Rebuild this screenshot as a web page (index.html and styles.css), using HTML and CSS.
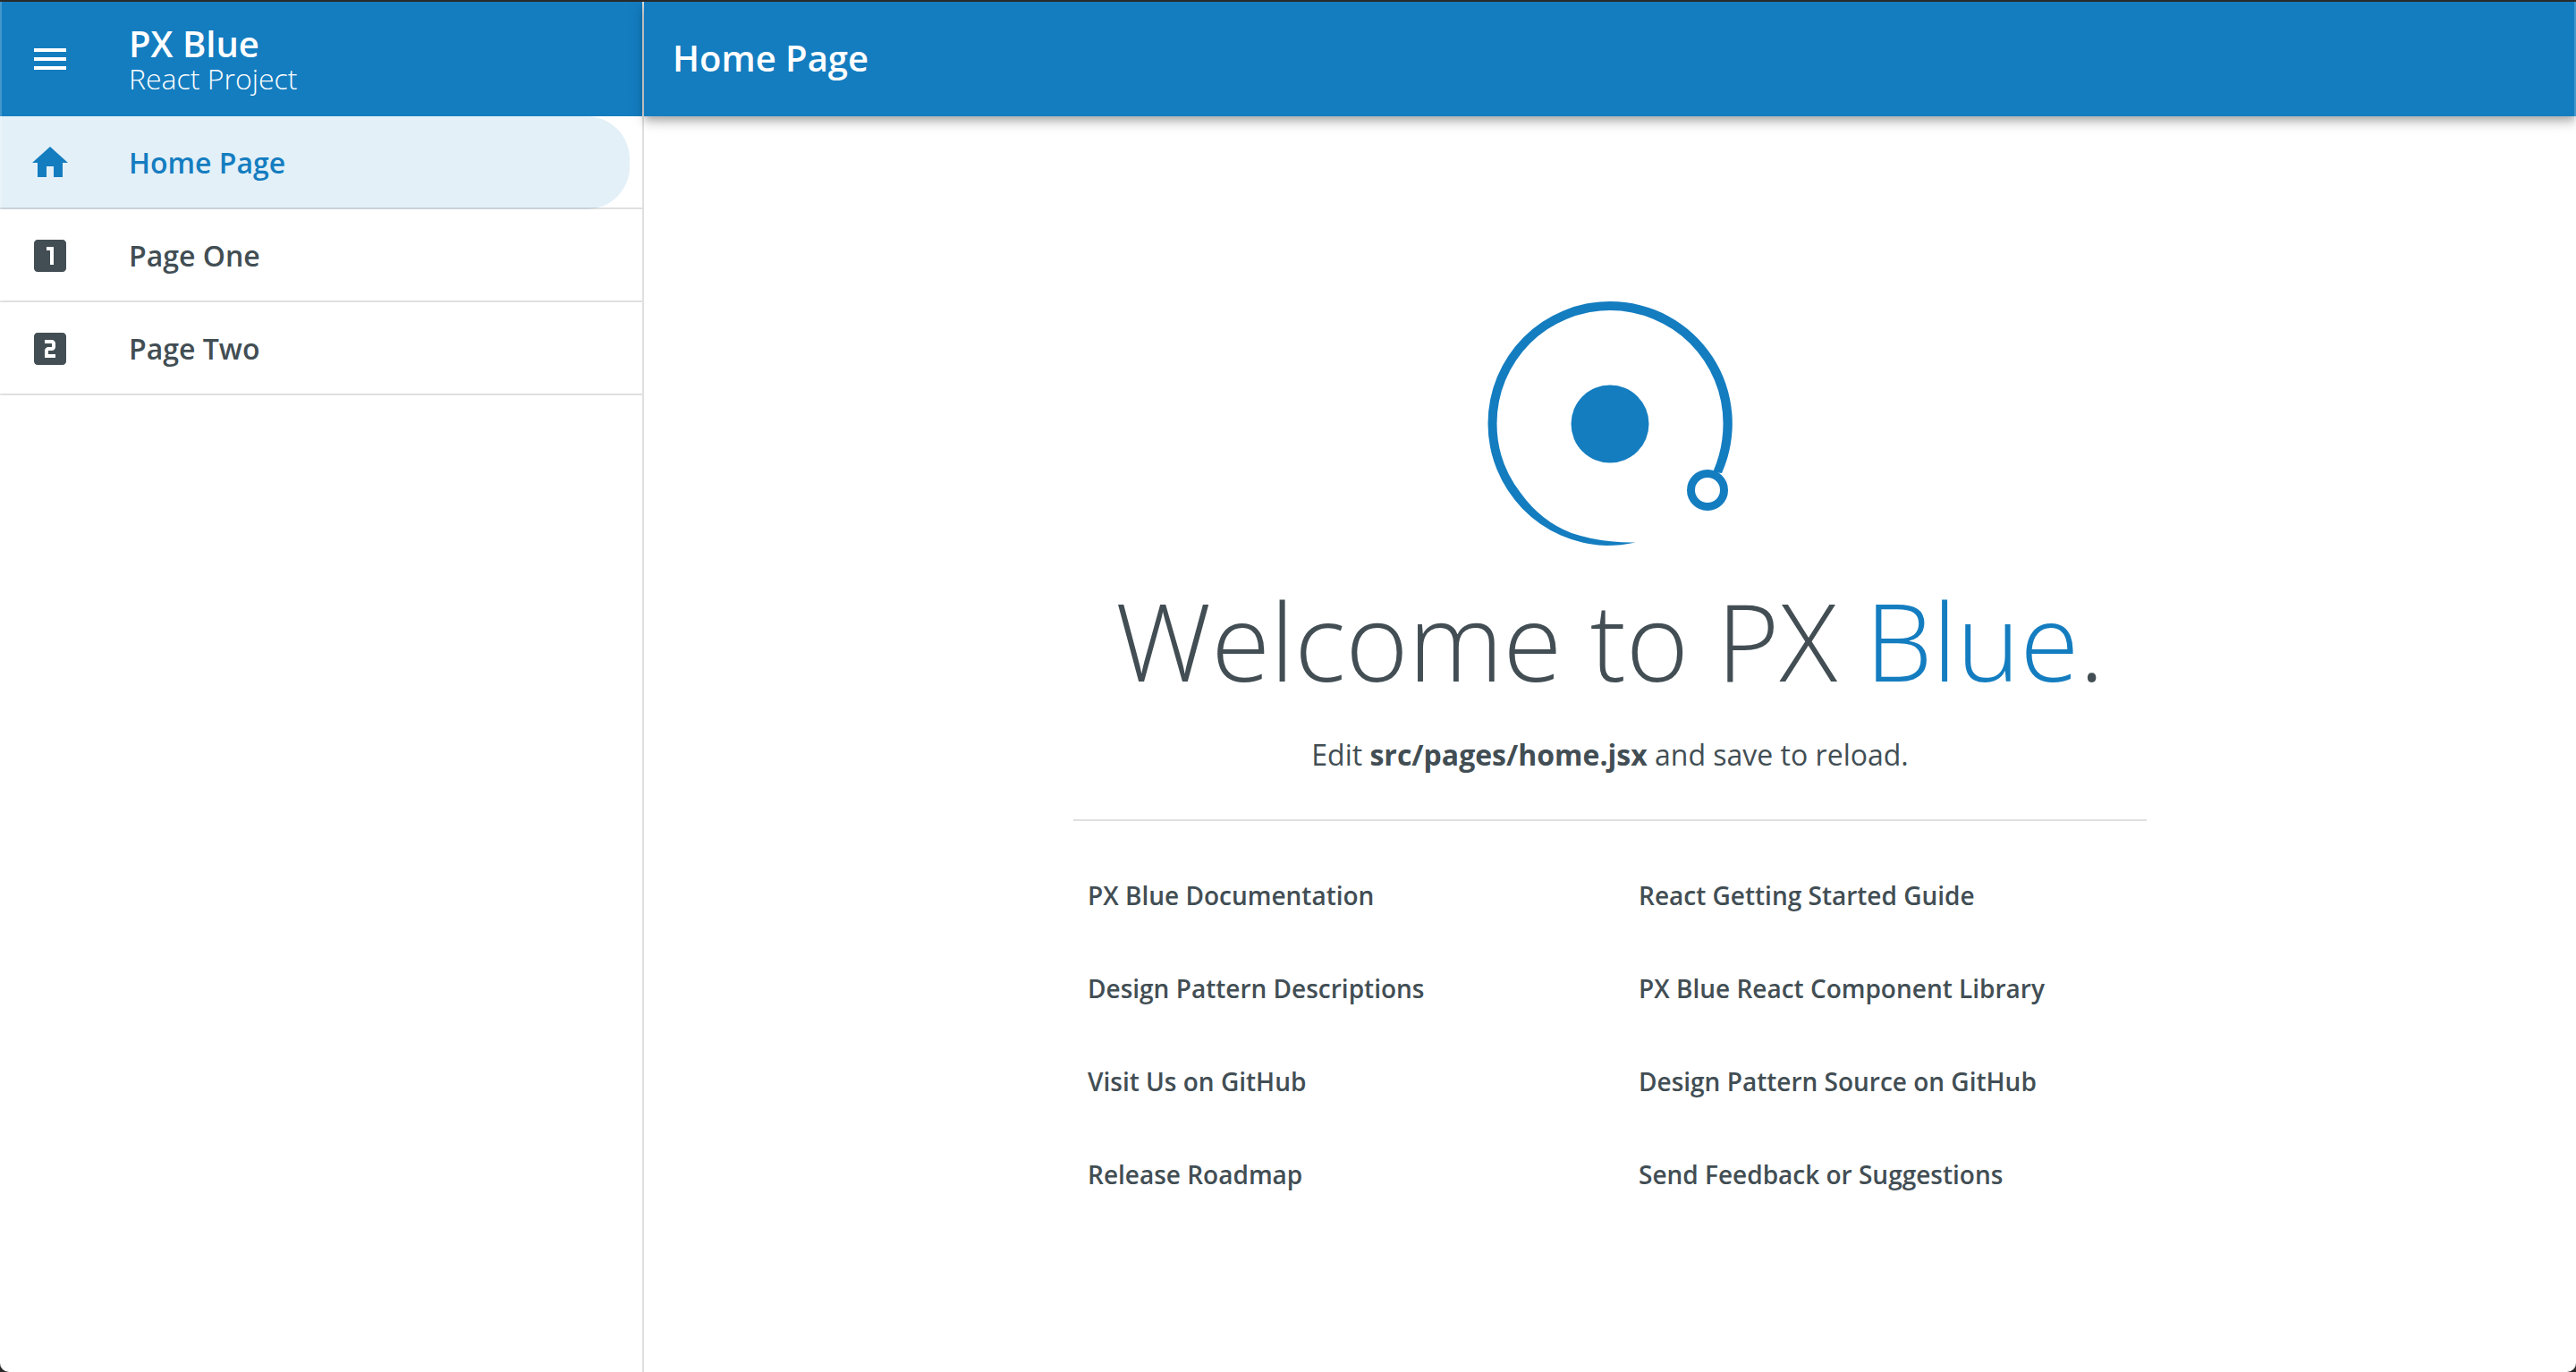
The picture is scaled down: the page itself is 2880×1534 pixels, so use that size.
FILE: index.html
```html
<!DOCTYPE html>
<html lang="en">
<head>
<meta charset="utf-8">
<title>PX Blue React Project</title>
<link rel="stylesheet" href="styles.css">
</head>
<body>
<div class="app">
  <aside class="drawer">
    <header class="drawer-header">
      <button class="menu-button" type="button" aria-label="Toggle menu">
        <svg class="icon" viewBox="0 0 24 24" aria-hidden="true"><path d="M3 18h18v-2H3v2zm0-5h18v-2H3v2zm0-7v2h18V6H3z"/></svg>
      </button>
      <div class="brand">
        <div class="brand-title">PX Blue</div>
        <div class="brand-subtitle">React Project</div>
      </div>
    </header>
    <nav class="nav" aria-label="Main">
      <a class="nav-item active" href="#home" aria-current="page">
        <svg class="icon" viewBox="0 0 24 24" aria-hidden="true"><path d="M10 20v-6h4v6h5v-8h3L12 3 2 12h3v8z"/></svg>
        <span class="nav-label">Home Page</span>
      </a>
      <a class="nav-item" href="#page-one">
        <svg class="icon" viewBox="0 0 24 24" aria-hidden="true"><path d="M19 3H5c-1.100 0-2 .9-2 2v14c0 1.100.9 2 2 2h14c1.100 0 2-.9 2-2V5c0-1.100-.9-2-2-2zm-5 14h-2V9h-2V7h4v10z"/></svg>
        <span class="nav-label">Page One</span>
      </a>
      <a class="nav-item" href="#page-two">
        <svg class="icon" viewBox="0 0 24 24" aria-hidden="true"><path d="M19 3H5c-1.100 0-2 .9-2 2v14c0 1.100.9 2 2 2h14c1.100 0 2-.9 2-2V5c0-1.100-.9-2-2-2zm-4 8c0 1.110-.9 2-2 2h-2v2h4v2H9v-4c0-1.110.9-2 2-2h2V9H9V7h4c1.100 0 2 .89 2 2v2z"/></svg>
        <span class="nav-label">Page Two</span>
      </a>
    </nav>
  </aside>
  <div class="content">
    <header class="app-bar">
      <h2 class="page-title">Home Page</h2>
    </header>
    <main class="main">
      <div class="welcome">
        <svg class="logo" viewBox="-16 -22 352 352" role="img" aria-label="PX Blue logo">
          <path d="M285 209A136.500 136.500 0 0 0 160 17A136.500 136.500 0 0 0 23.500 153.500A136.500 136.500 0 0 0 156 290Q172 290 188.500 286.500Q150 287 117 276Q83 263 60 231A126.500 126.500 0 0 1 33.500 153.500A126.500 126.500 0 0 1 160 27A126.500 126.500 0 0 1 286.500 153.500Q286.500 182 275 208Z"/>
          <circle cx="160" cy="154" r="43.500"/>
          <circle class="logo-ring" cx="269" cy="228" r="18.500"/>
        </svg>
        <h1 class="headline">Welcome to PX <span class="accent">Blue</span>.</h1>
        <p class="hint">Edit <strong>src/pages/home.jsx</strong> and save to reload.</p>
        <hr class="divider">
        <div class="links">
          <a href="#docs">PX Blue Documentation</a>
          <a href="#guide">React Getting Started Guide</a>
          <a href="#patterns">Design Pattern Descriptions</a>
          <a href="#components">PX Blue React Component Library</a>
          <a href="#github">Visit Us on GitHub</a>
          <a href="#pattern-source">Design Pattern Source on GitHub</a>
          <a href="#roadmap">Release Roadmap</a>
          <a href="#feedback">Send Feedback or Suggestions</a>
        </div>
      </div>
    </main>
  </div>
</div>
<div class="window-frame" aria-hidden="true"></div>
</body>
</html>
```
FILE: styles.css
```css
:root {
  --blue: #147dc0;
  --text: #424e54;
  --line: #e0e0e0;
}

* {
  box-sizing: border-box;
}

body {
  margin: 0;
  background: #fff;
  color: var(--text);
  font-family: "Open Sans", "Noto Sans", sans-serif;
}

a {
  color: inherit;
  text-decoration: none;
}

.app {
  display: flex;
  min-height: 100vh;
  padding-top: 2px;
}

.icon {
  display: block;
  flex: none;
  width: 48px;
  height: 48px;
  fill: currentColor;
}

/* Drawer */
.drawer {
  flex: none;
  width: 720px;
  border-right: 2px solid var(--line);
}

.drawer-header {
  display: flex;
  align-items: center;
  gap: 64px;
  height: 128px;
  padding: 0 32px;
  background: var(--blue);
  color: #fff;
}

.menu-button {
  padding: 0;
  border: 0;
  background: none;
  color: inherit;
}

.brand {
  padding-top: 4px;
}

.brand-title {
  font-size: 40px;
  font-weight: 600;
  line-height: 40px;
}

.brand-subtitle {
  font-size: 32px;
  font-weight: 300;
  line-height: 38px;
}

.nav-item {
  position: relative;
  display: flex;
  align-items: center;
  gap: 64px;
  height: 104px;
  padding: 0 32px;
  font-size: 32px;
  font-weight: 600;
  box-shadow: inset 0 -2px rgba(0, 0, 0, 0.12);
}

.nav-label {
  padding-bottom: 2px;
}

.nav-item.active {
  color: var(--blue);
}

.nav-item.active::before {
  content: "";
  position: absolute;
  z-index: -1;
  inset: 0 14px 0 0;
  border-radius: 0 48px 48px 0;
  background: #e3f0f8;
}

/* Page */
.content {
  display: flex;
  flex: 1;
  flex-direction: column;
}

.app-bar {
  position: relative;
  display: flex;
  align-items: center;
  height: 128px;
  padding: 0 32px 2px;
  background: var(--blue);
  color: #fff;
  box-shadow: 0 4px 8px -2px rgba(0, 0, 0, 0.2), 0 8px 10px rgba(0, 0, 0, 0.14), 0 2px 20px rgba(0, 0, 0, 0.12);
}

.page-title {
  margin: 0;
  font-size: 40px;
  font-weight: 600;
  line-height: 64px;
}

.main {
  display: flex;
  flex: 1;
  align-items: center;
  justify-content: center;
}

.welcome {
  width: 100%;
  max-width: 1200px;
  text-align: center;
}

.logo {
  display: block;
  width: 352px;
  height: 352px;
  margin: 0 auto;
  fill: var(--blue);
}

.logo-ring {
  fill: none;
  stroke: var(--blue);
  stroke-width: 9;
}

.headline {
  margin: 0 0 40px;
  font-size: 120px;
  font-weight: 300;
  line-height: 132px;
}

.accent {
  color: var(--blue);
}

.hint {
  margin: 0;
  font-size: 32px;
  line-height: 44px;
}

.divider {
  height: 2px;
  margin: 50px 0 32px;
  border: 0;
  background: var(--line);
}

.links {
  display: grid;
  grid-template-columns: 1fr 1fr;
  column-gap: 32px;
  text-align: left;
}

.links a {
  padding: 31px 16px 33px;
  font-size: 28px;
  font-weight: 600;
  line-height: 40px;
}

/* Rounded window outline laid over the page */
.window-frame {
  position: fixed;
  z-index: 10;
  inset: 2px 0 0;
  border: solid rgba(255, 255, 255, 0.2);
  border-width: 0 2px;
  border-radius: 0 0 10px 10px;
  box-shadow: 0 0 0 12px #292929;
  pointer-events: none;
}
```
